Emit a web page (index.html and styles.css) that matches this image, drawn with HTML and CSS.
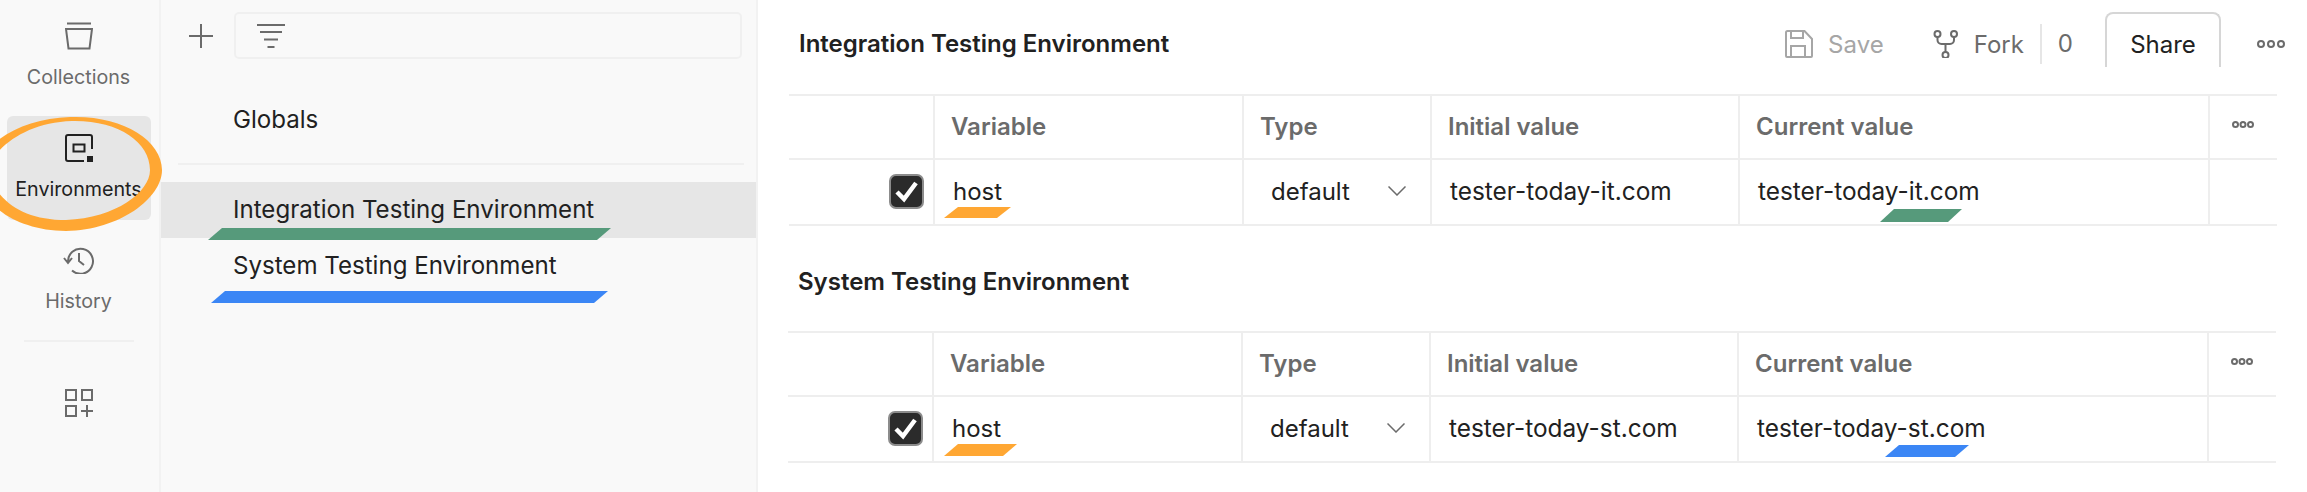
FILE: index.html
```html
<!DOCTYPE html>
<html lang="en">
<head>
    <meta charset="UTF-8">
    <title>Environments</title>
    <link rel="stylesheet" href="styles.css">
</head>
<body>
    <div class="app">
        <!-- left rail -->
        <nav class="rail">
            <div class="rail-item">
                <svg class="icon" width="28" height="28" viewBox="0 0 28 28"><path d="M2 1.500H26M1 7H27L24.500 26.500H3.500Z"/></svg>
                <span>Collections</span>
            </div>
            <div class="rail-item active">
                <svg class="icon" width="28" height="28" viewBox="0 0 28 28"><path d="M27 15V3a2 2 0 0 0-2-2H3a2 2 0 0 0-2 2V25a2 2 0 0 0 2 2H19M8.500 10.500H19.500V17.500H8.500Z"/><rect class="solid" x="22" y="22" width="6" height="6"/></svg>
                <span>Environments</span>
            </div>
            <div class="rail-item">
                <svg class="icon" width="32" height="28" viewBox="0 0 32 28"><path d="M5 16A12.500 12.500 0 1 1 9 24.500M1 12L5 17L9 12M16 7V15L21 19"/></svg>
                <span>History</span>
            </div>
            <div class="rail-divider"></div>
            <svg class="icon rail-add" width="28" height="28" viewBox="0 0 28 28"><path d="M1 1H11V11H1ZM17 1H27V11H17ZM1 17H11V27H1ZM16 22H28M22 16V28"/></svg>
        </nav>

        <!-- list of environments -->
        <aside class="sidebar">
            <div class="search-row">
                <svg class="icon" width="24" height="24" viewBox="0 0 24 24"><path d="M0 12H24M12 0V24"/></svg>
                <div class="search-box">
                    <svg class="icon" width="28" height="24" viewBox="0 0 28 24"><path d="M0 1H28M3 8H25M7 15.500H21M10.500 23H17.500"/></svg>
                </div>
            </div>
            <div class="env-row">Globals</div>
            <div class="sidebar-divider"></div>
            <div class="env-row selected">Integration Testing Environment</div>
            <div class="env-row">System Testing Environment</div>
        </aside>

        <main class="main">
            <header class="topbar">
                <h1 class="title">Integration Testing Environment</h1>
                <div class="actions">
                    <span class="action muted">
                        <svg class="icon" width="28" height="28" viewBox="0 0 28 28"><path d="M1 2.500V26a1 1 0 0 0 1 1H26a1 1 0 0 0 1-1V9L19.500 1H2.500A1.500 1.500 0 0 0 1 2.500ZM6 1V8H18V1M6 27V16H20V27"/></svg>
                        Save
                    </span>
                    <span class="action fork">
                        <svg class="icon" width="26" height="28" viewBox="0 0 26 28"><circle cx="4.500" cy="4" r="3"/><circle cx="21" cy="4" r="3"/><circle cx="12.500" cy="25" r="3"/><path d="M4.500 7V10a4 4 0 0 0 4 4H17a4 4 0 0 0 4-4V7M12.500 14V22"/></svg>
                        Fork
                    </span>
                    <span class="fork-count">0</span>
                    <button class="share">Share</button>
                    <svg class="icon dots" width="28" height="8" viewBox="0 0 28 8"><circle cx="4" cy="4" r="3"/><circle cx="14" cy="4" r="3"/><circle cx="24" cy="4" r="3"/></svg>
                </div>
            </header>

            <section class="env-table">
                <div class="cell head"></div>
                <div class="cell head">Variable</div>
                <div class="cell head">Type</div>
                <div class="cell head">Initial value</div>
                <div class="cell head">Current value</div>
                <div class="cell head last">
                    <svg class="icon dots-small" width="22" height="7" viewBox="0 0 22 7"><circle cx="3.500" cy="3.500" r="2.500"/><circle cx="11" cy="3.500" r="2.500"/><circle cx="18.500" cy="3.500" r="2.500"/></svg>
                </div>
                <div class="cell check-cell"><span class="checkbox"><svg width="25" height="23" viewBox="0 0 25 23"><path d="M3 12L10 19L22 3"/></svg></span></div>
                <div class="cell name">host</div>
                <div class="cell type">default<svg class="icon chevron" width="18" height="10" viewBox="0 0 18 10"><path d="M0.500 0.500L9 9L17.500 0.500"/></svg></div>
                <div class="cell value">tester-today-it.com</div>
                <div class="cell value">tester-today-it.com</div>
                <div class="cell last"></div>
            </section>

            <h2 class="title title-second">System Testing Environment</h2>

            <section class="env-table second">
                <div class="cell head"></div>
                <div class="cell head">Variable</div>
                <div class="cell head">Type</div>
                <div class="cell head">Initial value</div>
                <div class="cell head">Current value</div>
                <div class="cell head last">
                    <svg class="icon dots-small" width="22" height="7" viewBox="0 0 22 7"><circle cx="3.500" cy="3.500" r="2.500"/><circle cx="11" cy="3.500" r="2.500"/><circle cx="18.500" cy="3.500" r="2.500"/></svg>
                </div>
                <div class="cell check-cell"><span class="checkbox"><svg width="25" height="23" viewBox="0 0 25 23"><path d="M3 12L10 19L22 3"/></svg></span></div>
                <div class="cell name">host</div>
                <div class="cell type">default<svg class="icon chevron" width="18" height="10" viewBox="0 0 18 10"><path d="M0.500 0.500L9 9L17.500 0.500"/></svg></div>
                <div class="cell value">tester-today-st.com</div>
                <div class="cell value">tester-today-st.com</div>
                <div class="cell last"></div>
            </section>
        </main>

        <!-- hand drawn marks on top of the screenshot -->
        <svg class="circle-mark" width="170" height="120" viewBox="0 0 170 120"><path fill-rule="evenodd" d="M70 1C122 -1 162 24 162 54C162 82 120 114 66 115C30 115 0 100 -10 84L-10 32C6 14 36 2 70 1ZM72 5C38 6 12 20 -2 36L-2 76C12 94 34 104 66 104C116 102 150 76 150 54C150 26 118 4 72 5Z"/></svg>
        <span class="mark green side-green"></span>
        <span class="mark blue side-blue"></span>
        <span class="mark orange host-one"></span>
        <span class="mark green value-one"></span>
        <span class="mark orange host-two"></span>
        <span class="mark blue value-two"></span>
    </div>
</body>
</html>
```

FILE: styles.css
```css
* {
    box-sizing: border-box;
}
body {
    margin: 0;
    font-family: Inter, "Liberation Sans", sans-serif;
    font-size: 24px;
    color: #212121;
    background-color: #ffffff;
}
.app {
    position: relative;
    display: flex;
    height: 492px;
    overflow: hidden;
}
.icon {
    fill: none;
    stroke: #6b6b6b;
    stroke-width: 2;
    flex: none;
}

/* rail */
.rail {
    width: 161px;
    flex: none;
    display: flex;
    flex-direction: column;
    align-items: center;
    gap: 8px;
    padding: 4px 9px 0 7px;
    background-color: #f9f9f9;
    border-right: 2px solid #f2f2f2;
}
.rail-item {
    width: 144px;
    height: 104px;
    flex: none;
    display: flex;
    flex-direction: column;
    align-items: center;
    padding-top: 18px;
    border-radius: 6px;
    font-size: 19.700px;
    line-height: 24px;
    color: #6b6b6b;
}
.rail-item span {
    margin-top: 15px;
}
.rail-item.active {
    background-color: #e6e6e6;
    color: #212121;
}
.rail-item.active .icon {
    stroke: #212121;
}
.rail-item.active .solid {
    fill: #212121;
    stroke: none;
}
.rail-divider {
    width: 110px;
    height: 2px;
    flex: none;
    background-color: #f0f0f0;
}
.rail-add {
    margin-top: 39px;
}

/* sidebar */
.sidebar {
    width: 597px;
    flex: none;
    background-color: #f9f9f9;
    border-right: 2px solid #f2f2f2;
}
.search-row {
    display: flex;
    align-items: center;
    gap: 21px;
    height: 47px;
    margin-top: 12px;
    padding: 0 14px 0 28px;
}
.search-box {
    flex: 1;
    height: 47px;
    display: flex;
    align-items: center;
    padding-left: 21px;
    border: 2px solid #f0f0f0;
    border-radius: 5px;
}
.env-row {
    height: 56px;
    line-height: 56px;
    padding-left: 72px;
    font-size: 24.100px;
}
.search-row + .env-row {
    margin-top: 33px;
}
.env-row.selected {
    background-color: #e6e6e6;
}
.sidebar-divider {
    height: 2px;
    margin: 15px 12px 17px 17px;
    background-color: #f0f0f0;
}

/* main */
.main {
    flex: 1;
    min-width: 0;
    padding: 12px 30px 0 31px;
}
.topbar {
    display: flex;
    height: 82px;
    padding-left: 10px;
}
.title {
    margin: 0;
    font-size: 24px;
    font-weight: 600;
    line-height: 64px;
    color: #212121;
}
.title-second {
    margin: 24px 0 17px 9px;
}
.actions {
    margin-left: auto;
    display: flex;
    align-items: flex-start;
    margin-right: -8px;
    color: #6b6b6b;
}
.action {
    display: flex;
    align-items: center;
    gap: 15px;
    height: 64px;
}
.action.muted {
    color: #a6a6a6;
}
.action.muted .icon {
    stroke: #a6a6a6;
}
.fork {
    margin-left: 49px;
}
.fork-count {
    height: 40px;
    line-height: 40px;
    margin: 12px 32px 0 16px;
    padding-left: 16px;
    border-left: 2px solid #e6e6e6;
}
.share {
    width: 116px;
    height: 55px;
    padding: 7px 0 0;
    font: inherit;
    color: #212121;
    background-color: #ffffff;
    border: 2px solid #d6d6d6;
    border-bottom: none;
    border-radius: 8px 8px 0 0;
}
.dots {
    margin: 28px 0 0 36px;
}

/* variable tables */
.env-table {
    display: grid;
    grid-template-columns: 146px 309px 188px 308px 470px 67px;
    grid-template-rows: 64px 66px;
    width: 1488px;
    border-top: 2px solid #eeeeee;
}
.env-table.second {
    margin-left: -1px;
}
.cell {
    display: flex;
    align-items: center;
    padding-left: 18px;
    border-right: 2px solid #eeeeee;
    border-bottom: 2px solid #eeeeee;
}
.cell.last {
    border-right: none;
}
.cell.head {
    font-weight: 600;
    color: #6b6b6b;
    padding-bottom: 2px;
    padding-left: 16px;
}
.cell.head.last {
    padding-left: 22px;
    padding-bottom: 6px;
}
.check-cell {
    justify-content: flex-end;
    padding: 0 9px 2px 0;
}
.cell.name,
.cell.type,
.cell.value {
    padding-bottom: 2px;
}
.cell.value {
    font-size: 24.400px;
}
.cell.type {
    padding-left: 27px;
}
.checkbox {
    width: 35px;
    height: 35px;
    display: flex;
    align-items: center;
    justify-content: center;
    background-color: #2b2b2b;
    border: 2px solid #8c8c8c;
    border-radius: 7px;
}
.checkbox svg {
    flex: none;
    fill: none;
    stroke: #ffffff;
    stroke-width: 4.500;
}
.chevron {
    margin-left: 38px;
    stroke-width: 1.500;
}

/* marker strokes */
.circle-mark {
    position: absolute;
    left: 0;
    top: 116px;
    fill: #ffa733;
    overflow: visible;
}
.mark {
    position: absolute;
    clip-path: polygon(14px 0, 100% 0, calc(100% - 14px) 100%, 0 100%);
}
.mark.green {
    background-color: #569a7b;
}
.mark.blue {
    background-color: #3b86f5;
}
.mark.orange {
    background-color: #ffa733;
}
.side-green {
    left: 208px;
    top: 228px;
    width: 403px;
    height: 12px;
}
.side-blue {
    left: 211px;
    top: 291px;
    width: 397px;
    height: 12px;
}
.host-one {
    left: 944px;
    top: 207px;
    width: 67px;
    height: 11px;
}
.value-one {
    left: 1880px;
    top: 209px;
    width: 82px;
    height: 13px;
}
.host-two {
    left: 944px;
    top: 444px;
    width: 73px;
    height: 12px;
}
.value-two {
    left: 1885px;
    top: 445px;
    width: 84px;
    height: 12px;
}
```
